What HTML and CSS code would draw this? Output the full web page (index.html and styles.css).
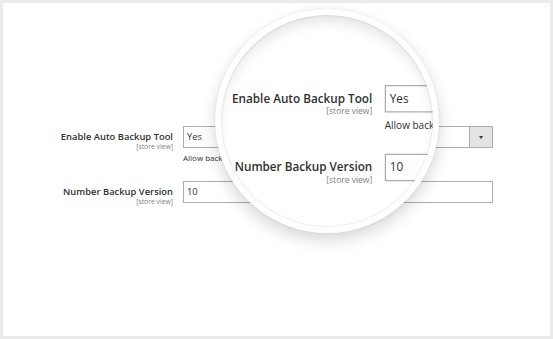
FILE: index.html
```html
<!DOCTYPE html>
<html lang="en">
<head>
<meta charset="utf-8">
<title>Backup settings</title>
<link rel="stylesheet" href="styles.css">
</head>
<body>
<div class="frame">
  <div class="page">
    <div class="config">
      <div class="row">
        <div class="label-col">
          <div class="label">Enable Auto Backup Tool</div>
          <div class="scope">[store view]</div>
        </div>
        <div class="control">
          <div class="select">
            <span class="value">Yes</span>
            <span class="arrow"></span>
          </div>
          <div class="note">Allow backup your store automatically</div>
        </div>
      </div>
      <div class="row">
        <div class="label-col">
          <div class="label">Number Backup Version</div>
          <div class="scope">[store view]</div>
        </div>
        <div class="control">
          <div class="input">10</div>
        </div>
      </div>
    </div>
  </div>

  <div class="lens">
    <div class="lens-copy">
      <div class="page">
        <div class="config">
          <div class="row">
            <div class="label-col">
              <div class="label">Enable Auto Backup Tool</div>
              <div class="scope">[store view]</div>
            </div>
            <div class="control">
              <div class="select">
                <span class="value">Yes</span>
                <span class="arrow"></span>
              </div>
              <div class="note">Allow backup your store automatically</div>
            </div>
          </div>
          <div class="row">
            <div class="label-col">
              <div class="label">Number Backup Version</div>
              <div class="scope">[store view]</div>
            </div>
            <div class="control">
              <div class="input">10</div>
            </div>
          </div>
        </div>
      </div>
    </div>
  </div>
</div>
</body>
</html>
```

FILE: styles.css
```css
* { box-sizing: border-box; }

html, body {
  margin: 0;
  padding: 0;
  background: #ffffff;
}

body {
  font-family: "Open Sans", "Liberation Sans", sans-serif;
  color: #303030;
}

.frame {
  position: relative;
  width: 553px;
  height: 339px;
  border: 3px solid #ebebeb;
  background: #ffffff;
  overflow: hidden;
}

.page {
  padding-top: 123px;
}

.config {
  display: flex;
  flex-direction: column;
  gap: 18px;
}

.row {
  display: grid;
  grid-template-columns: 170px 310px;
  column-gap: 10px;
}

.label-col {
  text-align: right;
  padding-top: 4px;
}

.label {
  font-size: 9.4px;
  font-weight: 600;
  line-height: 13px;
  color: #303030;
  white-space: nowrap;
}

.scope {
  font-size: 6.8px;
  line-height: 8px;
  color: #808080;
  white-space: nowrap;
}

.select,
.input {
  height: 22px;
  border: 1px solid #adadad;
  background: #ffffff;
  font-size: 9.4px;
  line-height: 20px;
  color: #303030;
}

.select {
  display: flex;
}

.value {
  flex: 1;
  padding-left: 3px;
}

.input {
  padding-left: 3px;
}

.arrow {
  width: 23px;
  background: #e3e3e3;
  border-left: 1px solid #adadad;
  display: flex;
  align-items: center;
  justify-content: center;
}

.arrow::before {
  content: "";
  border-left: 2.5px solid transparent;
  border-right: 2.5px solid transparent;
  border-top: 3px solid #41362f;
}

.note {
  margin-top: 4px;
  font-size: 8px;
  line-height: 11px;
  color: #303030;
  white-space: nowrap;
}

/* magnifier lens overlay */
.lens {
  position: absolute;
  left: 212px;
  top: 6px;
  width: 224px;
  height: 224px;
  border: 6px solid #ffffff;
  border-radius: 50%;
  background: #ffffff;
  overflow: hidden;
  box-shadow: 0 7px 16px rgba(0, 0, 0, 0.16), 0 0 3px rgba(0, 0, 0, 0.08);
}

.lens::after {
  content: "";
  position: absolute;
  inset: 0;
  border-radius: 50%;
  box-shadow: inset 0 10px 16px -6px rgba(0, 0, 0, 0.14), inset 0 0 2px rgba(0, 0, 0, 0.22);
  pointer-events: none;
}

.lens-copy {
  position: absolute;
  left: -221px;
  top: -15px;
  width: 553px;
  height: 339px;
  padding: 3px;
  transform-origin: 0 0;
  transform: translate(156px, -72.5px) scale(1.25);
}
```
